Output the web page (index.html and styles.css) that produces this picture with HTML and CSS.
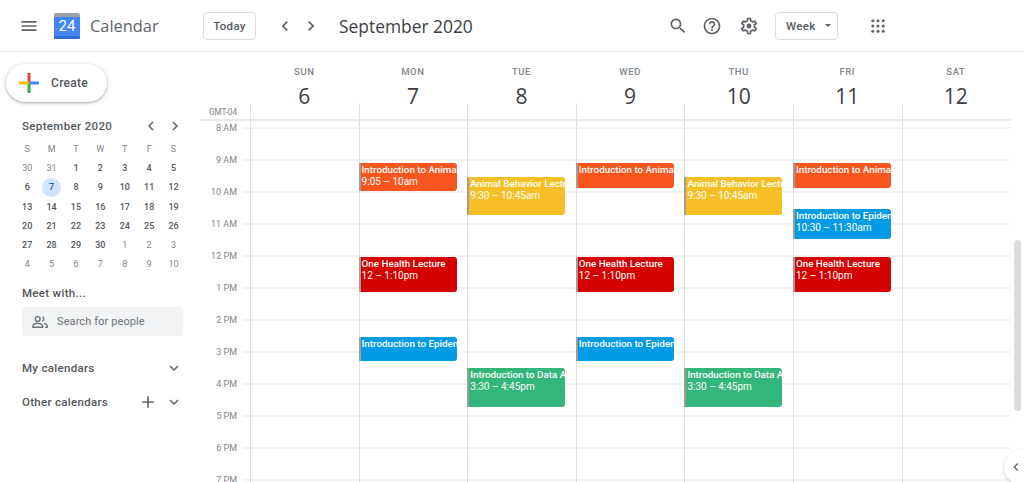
FILE: index.html
```html
<!DOCTYPE html>
<html lang="en">
<head>
<meta charset="UTF-8">
<meta name="viewport" content="width=device-width, initial-scale=1.0">
<title>Google Calendar - Week of September 6, 2020</title>
<link rel="stylesheet" href="styles.css">
</head>
<body>

<svg class="icon-defs" width="0" height="0">
  <symbol id="i-menu" viewBox="0 0 24 24"><path d="M3 18h18v-2H3v2zm0-5h18v-2H3v2zm0-7v2h18V6H3z"/></symbol>
  <symbol id="i-left" viewBox="0 0 24 24"><path d="M15.41 7.41L14 6l-6 6 6 6 1.41-1.41L10.83 12z"/></symbol>
  <symbol id="i-right" viewBox="0 0 24 24"><path d="M10 6L8.59 7.41 13.17 12l-4.58 4.59L10 18l6-6z"/></symbol>
  <symbol id="i-down" viewBox="0 0 24 24"><path d="M7.41 8.59L12 13.17l4.59-4.58L18 10l-6 6-6-6z"/></symbol>
  <symbol id="i-search" viewBox="0 0 24 24"><path d="M15.5 14h-.79l-.28-.27C15.41 12.59 16 11.11 16 9.5 16 5.91 13.09 3 9.5 3S3 5.91 3 9.5 5.91 16 9.5 16c1.61 0 3.09-.59 4.23-1.57l.27.28v.79l5 4.99L20.49 19l-4.99-5zm-6 0C7.01 14 5 11.99 5 9.5S7.01 5 9.5 5 14 7.01 14 9.5 11.99 14 9.5 14z"/></symbol>
  <symbol id="i-help" viewBox="0 0 24 24"><path d="M11 18h2v-2h-2v2zm1-16C6.48 2 2 6.48 2 12s4.48 10 10 10 10-4.48 10-10S17.52 2 12 2zm0 18c-4.41 0-8-3.59-8-8s3.59-8 8-8 8 3.59 8 8-3.59 8-8 8zm0-14c-2.21 0-4 1.79-4 4h2c0-1.1.9-2 2-2s2 .9 2 2c0 2-3 1.75-3 5h2c0-2.25 3-2.5 3-5 0-2.21-1.79-4-4-4z"/></symbol>
  <symbol id="i-gear" viewBox="0 0 24 24"><path d="M19.43 12.98c.04-.32.07-.64.07-.98 0-.34-.03-.66-.07-.98l2.11-1.65c.19-.15.24-.42.12-.64l-2-3.46c-.09-.16-.26-.25-.44-.25-.06 0-.12.01-.17.03l-2.49 1c-.52-.4-1.08-.73-1.69-.98l-.38-2.65C14.46 2.18 14.25 2 14 2h-4c-.25 0-.46.18-.49.42l-.38 2.65c-.61.25-1.17.59-1.69.98l-2.49-1c-.06-.02-.12-.03-.18-.03-.17 0-.34.09-.43.25l-2 3.46c-.13.22-.07.49.12.64l2.11 1.65c-.04.32-.07.65-.07.98 0 .33.03.66.07.98l-2.11 1.65c-.19.15-.24.42-.12.64l2 3.46c.09.16.26.25.44.25.06 0 .12-.01.17-.03l2.49-1c.52.4 1.08.73 1.69.98l.38 2.65c.03.24.24.42.49.42h4c.25 0 .46-.18.49-.42l.38-2.65c.61-.25 1.17-.59 1.69-.98l2.49 1c.06.02.12.03.18.03.17 0 .34-.09.43-.25l2-3.46c.12-.22.07-.49-.12-.64l-2.11-1.65zm-1.98-1.71c.04.31.05.52.05.73 0 .21-.02.43-.05.73l-.14 1.13.89.7 1.08.84-.7 1.21-1.27-.51-1.04-.42-.9.68c-.43.32-.84.56-1.25.73l-1.06.43-.16 1.13-.2 1.35h-1.4l-.19-1.35-.16-1.13-1.06-.43c-.43-.18-.83-.41-1.23-.71l-.91-.7-1.06.43-1.27.51-.7-1.21 1.08-.84.89-.7-.14-1.13c-.03-.31-.05-.54-.05-.74s.02-.43.05-.73l.14-1.13-.89-.7-1.08-.84.7-1.21 1.27.51 1.04.42.9-.68c.43-.32.84-.56 1.25-.73l1.06-.43.16-1.13.2-1.35h1.39l.19 1.35.16 1.13 1.06.43c.43.18.83.41 1.23.71l.91.7 1.06-.43 1.27-.51.7 1.21-1.07.85-.89.7.14 1.13z"/><circle cx="12" cy="12" r="2.9"/></symbol>
  <symbol id="i-apps" viewBox="0 0 24 24"><circle cx="5" cy="5" r="2"/><circle cx="12" cy="5" r="2"/><circle cx="19" cy="5" r="2"/><circle cx="5" cy="12" r="2"/><circle cx="12" cy="12" r="2"/><circle cx="19" cy="12" r="2"/><circle cx="5" cy="19" r="2"/><circle cx="12" cy="19" r="2"/><circle cx="19" cy="19" r="2"/></symbol>
  <symbol id="i-plus" viewBox="0 0 24 24"><path d="M19 13h-6v6h-2v-6H5v-2h6V5h2v6h6z"/></symbol>
</svg>

<header class="topbar">
  <svg class="icon icon-menu"><use href="#i-menu"/></svg>
  <div class="logo"><span class="logo-day">24</span></div>
  <div class="wordmark">Calendar</div>
  <button class="btn">Today</button>
  <div class="nav">
    <svg class="icon"><use href="#i-left"/></svg>
    <svg class="icon"><use href="#i-right"/></svg>
  </div>
  <div class="range-title">September 2020</div>
  <div class="topbar-right">
    <svg class="icon icon-search"><use href="#i-search"/></svg>
    <svg class="icon icon-help"><use href="#i-help"/></svg>
    <svg class="icon"><use href="#i-gear"/></svg>
    <button class="btn btn-view">Week<span class="caret"></span></button>
    <svg class="icon icon-apps"><use href="#i-apps"/></svg>
  </div>
</header>

<main class="main">
  <aside class="sidebar">
    <button class="create">
      <svg class="create-plus" viewBox="0 0 20 20">
        <rect x="8.5" y="0" width="3" height="10" fill="#ea4335"/>
        <rect x="10" y="8.5" width="10" height="3" fill="#4285f4"/>
        <rect x="8.5" y="10" width="3" height="10" fill="#34a853"/>
        <rect x="0" y="8.5" width="10" height="3" fill="#fbbc04"/>
      </svg>
      Create
    </button>

    <div class="month-row">
      <span class="month-title">September 2020</span>
      <svg class="icon-sm"><use href="#i-left"/></svg>
      <svg class="icon-sm"><use href="#i-right"/></svg>
    </div>

    <div class="mini">
      <span class="dow">S</span><span class="dow">M</span><span class="dow">T</span><span class="dow">W</span><span class="dow">T</span><span class="dow">F</span><span class="dow">S</span>
      <span class="off">30</span><span class="off">31</span><span>1</span><span>2</span><span>3</span><span>4</span><span>5</span>
      <span>6</span><span class="today"><b>7</b></span><span>8</span><span>9</span><span>10</span><span>11</span><span>12</span>
      <span>13</span><span>14</span><span>15</span><span>16</span><span>17</span><span>18</span><span>19</span>
      <span>20</span><span>21</span><span>22</span><span>23</span><span>24</span><span>25</span><span>26</span>
      <span>27</span><span>28</span><span>29</span><span>30</span><span class="off">1</span><span class="off">2</span><span class="off">3</span>
      <span class="off">4</span><span class="off">5</span><span class="off">6</span><span class="off">7</span><span class="off">8</span><span class="off">9</span><span class="off">10</span>
    </div>

    <div class="side-heading meet">Meet with...</div>
    <div class="people-search">
      <svg class="people-icon" viewBox="0 0 24 24">
        <circle cx="9" cy="8" r="3.2"/>
        <path d="M2.5 19v-1.8c0-2.3 4.2-3.6 6.5-3.6s6.5 1.3 6.5 3.6V19z"/>
        <path d="M15 5.2a3 3 0 0 1 0 5.7M17.5 13.9c2.2.5 4 1.6 4 3.3V19h-2.6"/>
      </svg>
      <span>Search for people</span>
    </div>

    <div class="side-row my">
      <span class="side-heading">My calendars</span>
      <svg class="icon-sm"><use href="#i-down"/></svg>
    </div>
    <div class="side-row other">
      <span class="side-heading">Other calendars</span>
      <svg class="icon-plus"><use href="#i-plus"/></svg>
      <svg class="icon-sm"><use href="#i-down"/></svg>
    </div>
  </aside>

  <section class="week">
    <div class="week-head">
      <div class="head-day"><span class="head-name">SUN</span><span class="head-num">6</span></div>
      <div class="head-day"><span class="head-name">MON</span><span class="head-num">7</span></div>
      <div class="head-day"><span class="head-name">TUE</span><span class="head-num">8</span></div>
      <div class="head-day"><span class="head-name">WED</span><span class="head-num">9</span></div>
      <div class="head-day"><span class="head-name">THU</span><span class="head-num">10</span></div>
      <div class="head-day"><span class="head-name">FRI</span><span class="head-num">11</span></div>
      <div class="head-day"><span class="head-name">SAT</span><span class="head-num">12</span></div>
    </div>

    <div class="allday">
      <div class="gmt">GMT-04</div>
      <div class="allday-cell"></div><div class="allday-cell"></div><div class="allday-cell"></div><div class="allday-cell"></div><div class="allday-cell"></div><div class="allday-cell"></div><div class="allday-cell"></div>
    </div>

    <div class="week-body">
      <div class="times">
        <div class="time">8 AM</div>
        <div class="time">9 AM</div>
        <div class="time">10 AM</div>
        <div class="time">11 AM</div>
        <div class="time">12 PM</div>
        <div class="time">1 PM</div>
        <div class="time">2 PM</div>
        <div class="time">3 PM</div>
        <div class="time">4 PM</div>
        <div class="time">5 PM</div>
        <div class="time">6 PM</div>
        <div class="time">7 PM</div>
      </div>
      <div class="days">
        <div class="day"></div>

        <div class="day">
          <div class="event orange" style="top: 42px; height: 28px;"><b>Introduction to Animal Behavior</b>9:05 – 10am</div>
          <div class="event red" style="top: 136px; height: 35px;"><b>One Health Lecture</b>12 – 1:10pm</div>
          <div class="event blue" style="top: 216px; height: 24px;"><b>Introduction to Epidemiology</b></div>
        </div>

        <div class="day">
          <div class="event yellow" style="top: 56px; height: 38px;"><b>Animal Behavior Lecture</b>9:30 – 10:45am</div>
          <div class="event green" style="top: 247px; height: 39px;"><b>Introduction to Data Analysis</b>3:30 – 4:45pm</div>
        </div>

        <div class="day">
          <div class="event orange" style="top: 42px; height: 25px;"><b>Introduction to Animal Behavior</b></div>
          <div class="event red" style="top: 136px; height: 35px;"><b>One Health Lecture</b>12 – 1:10pm</div>
          <div class="event blue" style="top: 216px; height: 24px;"><b>Introduction to Epidemiology</b></div>
        </div>

        <div class="day">
          <div class="event yellow" style="top: 56px; height: 38px;"><b>Animal Behavior Lecture</b>9:30 – 10:45am</div>
          <div class="event green" style="top: 247px; height: 39px;"><b>Introduction to Data Analysis</b>3:30 – 4:45pm</div>
        </div>

        <div class="day">
          <div class="event orange" style="top: 42px; height: 25px;"><b>Introduction to Animal Behavior</b></div>
          <div class="event blue" style="top: 88px; height: 30px;"><b>Introduction to Epidemiology</b>10:30 – 11:30am</div>
          <div class="event red" style="top: 136px; height: 35px;"><b>One Health Lecture</b>12 – 1:10pm</div>
        </div>

        <div class="day"></div>
      </div>
    </div>
  </section>
</main>

<div class="scroll-thumb"></div>
<button class="side-toggle"><svg class="icon-toggle"><use href="#i-left"/></svg></button>

</body>
</html>
```

FILE: styles.css
```css
html, body {
  height: 100%;
  margin: 0;
  overflow: hidden;
}

body {
  background: #fff;
  color: #3c4043;
  font-family: Roboto, Arial, sans-serif;
}

button {
  font-family: inherit;
}

.icon-defs {
  position: absolute;
}

.icon, .icon-sm, .icon-plus {
  fill: #5f6368;
  flex: none;
}

.icon {
  width: 20px;
  height: 20px;
}

.icon-sm {
  width: 18px;
  height: 18px;
}

.icon-plus {
  width: 20px;
  height: 20px;
}

/* top bar */
.topbar {
  display: flex;
  align-items: center;
  height: 51px;
  padding-left: 19px;
  border-bottom: 1px solid #e3e4e6;
  box-sizing: content-box;
}

.logo {
  width: 26px;
  height: 26px;
  margin-left: 15px;
  border-radius: 2px 2px 1px 1px;
  border-top: 4px solid #9aa0a6;
  border-bottom: 3px solid #2f6fdc;
  box-sizing: border-box;
  background: #4285f4;
  display: flex;
  align-items: center;
  justify-content: center;
}

.logo-day {
  color: #fff;
  font-size: 15px;
  font-weight: 400;
}

.wordmark {
  width: 113px;
  margin-left: 10px;
  font-family: "Open Sans", Roboto, sans-serif;
  font-size: 16.4px;
  color: #5f6368;
}

.btn {
  height: 28px;
  padding: 0;
  border: 1px solid #dadce0;
  border-radius: 4px;
  background: #fff;
  color: #55585c;
  font-size: 11.5px;
  font-weight: 500;
  letter-spacing: .3px;
  width: 53px;
}

.nav {
  display: flex;
  gap: 6px;
  margin-left: 19px;
}

.range-title {
  margin-left: 18px;
  font-family: "Open Sans", Roboto, sans-serif;
  font-size: 17.4px;
  color: #3c4043;
}

.topbar-right {
  display: flex;
  align-items: center;
  gap: 15px;
  margin-left: auto;
  padding-right: 137px;
}

.icon-search {
  margin-right: -1px;
}

.icon-help {
  margin-right: 2px;
}

.btn-view {
  width: 63px;
  margin-left: 1px;
  display: flex;
  align-items: center;
  padding-left: 10px;
}

.caret {
  margin-left: 10px;
  border-left: 3.5px solid transparent;
  border-right: 3.5px solid transparent;
  border-top: 3.5px solid #5f6368;
}

.icon-apps {
  width: 18px;
  height: 18px;
  margin-left: 16px;
}

/* layout */
.main {
  display: flex;
  height: 430px;
}

.sidebar {
  width: 200px;
  flex: none;
  box-sizing: border-box;
  padding: 12px 17px 0 22px;
}

.create {
  display: flex;
  align-items: center;
  gap: 12px;
  width: 101px;
  height: 38px;
  margin-left: -16px;
  padding: 0 0 0 13px;
  border: 0;
  border-radius: 19px;
  background: #fff;
  box-shadow: 0 1px 2px rgba(60, 64, 67, .3), 0 1px 4px 1px rgba(60, 64, 67, .15);
  color: #55585c;
  font-size: 12px;
  font-weight: 500;
  letter-spacing: .3px;
}

.create-plus {
  width: 20px;
  height: 20px;
}

.month-row {
  display: flex;
  align-items: center;
  gap: 6px;
  height: 18px;
  margin: 15px -1px 0 0;
}

.month-title {
  flex: 1;
  font-size: 11.5px;
  font-weight: 500;
  letter-spacing: .35px;
  color: #55585c;
}

.mini {
  display: grid;
  grid-template-columns: repeat(7, 24.4px);
  grid-auto-rows: 19.2px;
  margin: 4.5px 0 0 -7px;
  font-size: 9px;
  font-weight: 500;
  color: #54575b;
}

.mini span {
  display: flex;
  align-items: center;
  justify-content: center;
}

.mini .dow,
.mini .off {
  color: #80868b;
  font-weight: 400;
}

.mini .today b {
  display: flex;
  align-items: center;
  justify-content: center;
  width: 19px;
  height: 19px;
  border-radius: 50%;
  background: #d2e3fc;
  color: #185abc;
  font-weight: 500;
}

.side-heading {
  font-size: 11.5px;
  font-weight: 500;
  letter-spacing: .3px;
  color: #55585c;
}

.meet {
  margin-top: 11.5px;
  line-height: 16px;
}

.people-search {
  display: flex;
  align-items: center;
  gap: 8px;
  height: 29px;
  margin-top: 6px;
  padding-left: 9px;
  border-radius: 4px;
  background: #f1f3f4;
  color: #70757a;
  font-size: 11px;
  letter-spacing: .1px;
}

.people-icon {
  width: 18px;
  height: 18px;
  fill: none;
  stroke: #70757a;
  stroke-width: 1.8;
}

.side-row {
  display: flex;
  align-items: center;
  height: 18px;
}

.side-row .side-heading {
  flex: 1;
}

.my {
  margin-top: 23px;
}

.other {
  margin-top: 16px;
}

.other .icon-plus {
  margin-right: 7px;
}

/* week grid */
.week {
  flex: 1;
  min-width: 0;
}

.week-head {
  display: grid;
  grid-template-columns: repeat(7, 108.6px);
  height: 51px;
  padding-left: 50px;
}

.head-day {
  display: flex;
  flex-direction: column;
  align-items: center;
}

.head-name {
  margin-top: 14px;
  font-size: 9.5px;
  font-weight: 500;
  letter-spacing: .6px;
  line-height: 11px;
  color: #80868b;
}

.head-num {
  margin-top: 5px;
  font-family: "Open Sans", Roboto, sans-serif;
  font-size: 21px;
  line-height: 28px;
  color: #3c4043;
}

.allday {
  display: grid;
  grid-template-columns: 50px repeat(7, 108.6px);
  height: 18px;
  width: 811px;
  box-sizing: border-box;
  border-bottom: 2px solid #e9eaeb;
}

.gmt {
  padding-right: 13px;
  margin-top: 4px;
  text-align: right;
  font-size: 8.2px;
  line-height: 11px;
  color: #80868b;
}

.allday-cell {
  border-left: 1px solid #e0e1e3;
}

.week-body {
  display: flex;
  height: 361px;
  width: 811px;
  overflow: hidden;
}

.times {
  width: 43px;
  flex: none;
  margin-top: -9px;
}

.time {
  height: 32px;
  line-height: 33px;
  padding-right: 6px;
  text-align: right;
  font-size: 9px;
  color: #80868b;
}

.days {
  flex: 1;
  display: grid;
  grid-template-columns: repeat(7, 108.6px);
  padding-left: 7px;
  background-image: linear-gradient(#f3f3f4 2px, transparent 2px);
  background-size: 100% 32px;
  background-position: 0 6px;
}

.day {
  position: relative;
  border-left: 1px solid #e0e1e3;
}

.event {
  position: absolute;
  left: -1px;
  width: 98px;
  box-sizing: border-box;
  padding: 1px 0 0 1px;
  border-left: 2px solid #a89a90;
  border-radius: 0 3px 3px 0;
  color: #fff;
  font-size: 10px;
  line-height: 12px;
  white-space: nowrap;
  overflow: hidden;
}

.event b {
  display: block;
  font-size: 9.8px;
  font-weight: 500;
}

.orange { background: #f9561f; }
.yellow { background: #f6bf26; }
.red { background: #d50000; }
.blue { background: #039be5; }
.green { background: #33b679; }

/* floating bits */
.scroll-thumb {
  position: absolute;
  top: 240px;
  left: 1014px;
  width: 7px;
  height: 171px;
  border-radius: 4px;
  background: #dadce0;
}

.side-toggle {
  position: absolute;
  top: 449px;
  left: 1004px;
  width: 40px;
  height: 36px;
  padding: 0 0 0 4px;
  border: 0;
  border-radius: 18px;
  background: #fff;
  box-shadow: 0 1px 3px rgba(60, 64, 67, .3);
  display: flex;
  align-items: center;
}

.icon-toggle {
  width: 16px;
  height: 16px;
  fill: #5f6368;
}
```
